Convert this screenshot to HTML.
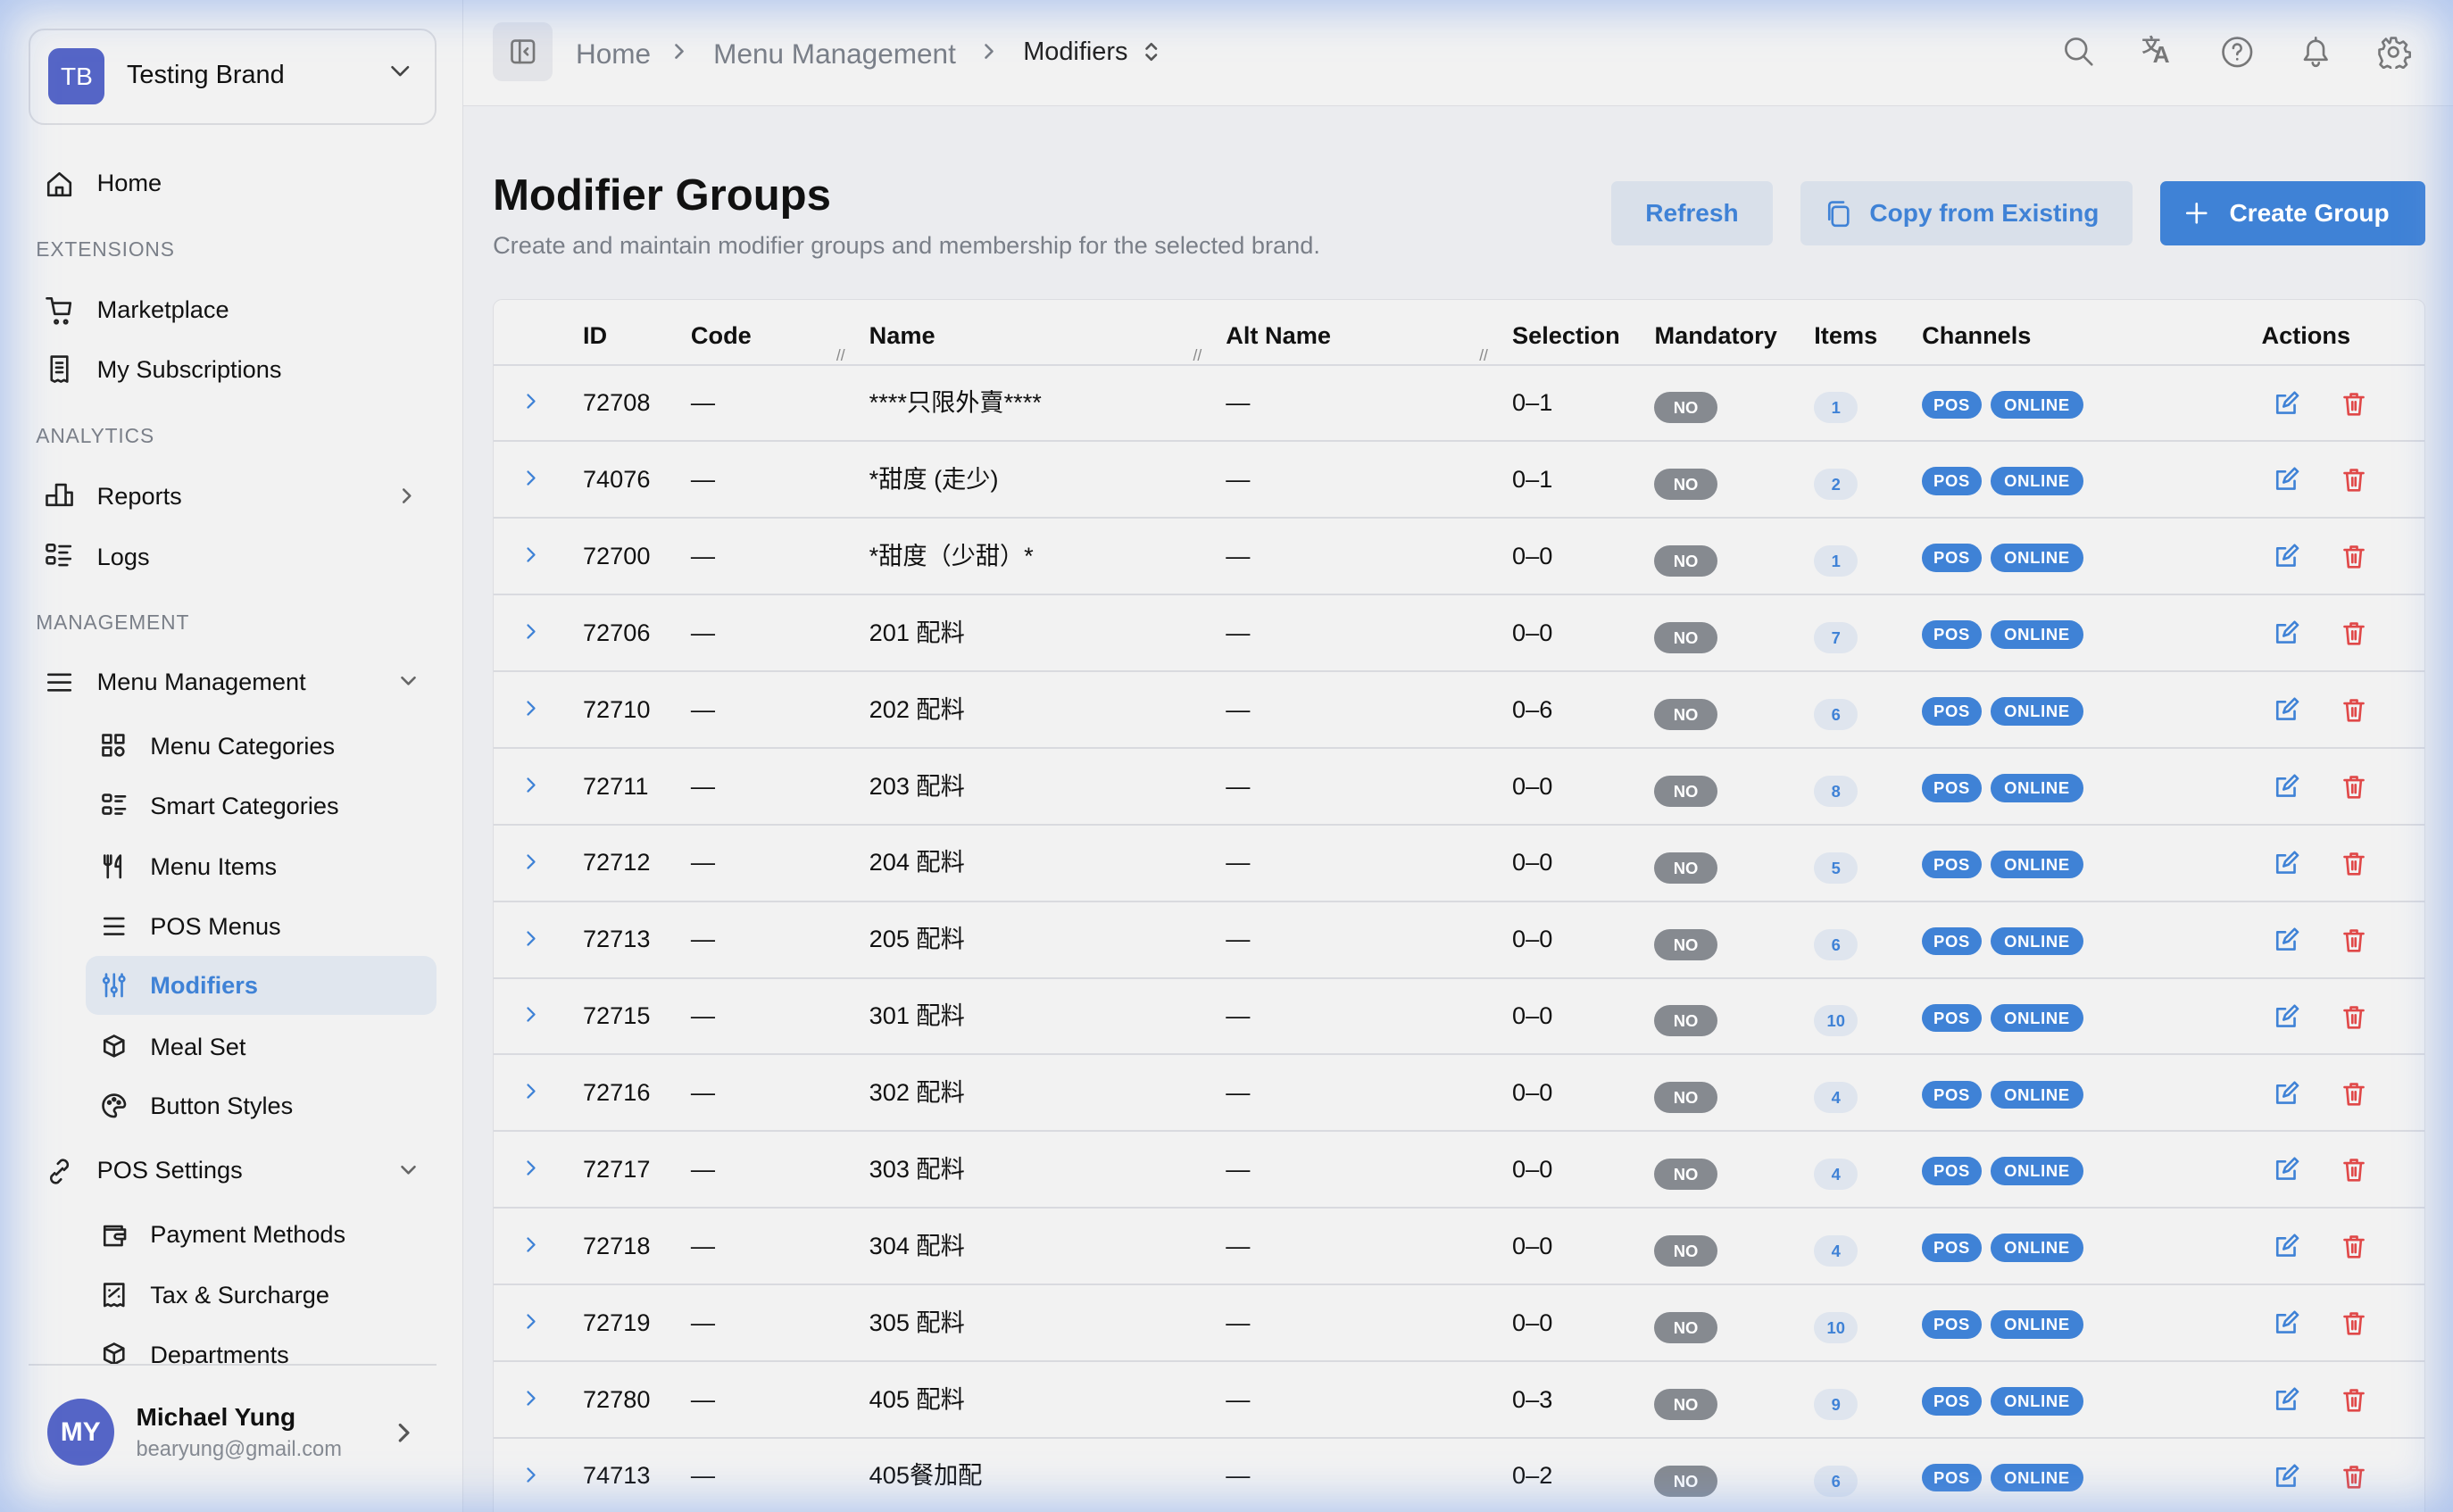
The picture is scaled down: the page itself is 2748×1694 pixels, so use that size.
<!DOCTYPE html>
<html><head><meta charset="utf-8"><style>
*{box-sizing:border-box;margin:0;padding:0}
html,body{width:2748px;height:1694px;overflow:hidden;background:#ebecef}
#w{zoom:1.7526;width:1568px;height:967px;position:relative;font-family:"Liberation Sans","Noto Sans CJK TC",sans-serif;color:#111;overflow:hidden}
.a{position:absolute;white-space:nowrap}
#side{position:absolute;left:0;top:0;width:296px;height:967px;background:#f2f2f2;border-right:1px solid #dcdde1}
#top{position:absolute;left:296px;top:0;right:0;height:68px;background:#f2f2f2;border-bottom:1px solid #dcdde1}
.nav{font-size:15.5px;color:#111}
.sec{font-size:13px;color:#7a7f88;letter-spacing:.5px}
svg{position:absolute;fill:none;stroke:currentColor;stroke-width:1.5;stroke-linecap:round;stroke-linejoin:round}
.ic{color:#222}
#tbl{position:absolute;left:315px;top:191px;width:1235px;height:800px;background:#f2f2f2;border:1px solid #dcdde1;border-radius:6px}
.th{font-size:15.5px;font-weight:bold;top:14px}
.row{position:absolute;left:0;width:100%;height:49px;border-top:1.5px solid #d9dadf;font-size:15.5px}
.row .a{top:14px;line-height:19px;height:19px}
.no{background:#868a90;color:#fff;font-size:10.5px;font-weight:bold;border-radius:10px;width:40px;height:20px!important;text-align:center;line-height:20px!important;top:17px!important}
.cnt{background:#dfe5ee;color:#3f82d6;font-size:10.5px;font-weight:bold;border-radius:10px;min-width:28px;height:20px!important;text-align:center;line-height:20px!important;top:17px!important;padding:0 6px}
.ch{background:#3f82d6;color:#fff;font-size:10.5px;font-weight:bold;border-radius:9px;height:18px!important;line-height:18px!important;text-align:center;top:16px!important;letter-spacing:.4px}
#vig{position:absolute;inset:0;pointer-events:none;box-shadow:inset 0 0 28px 6px rgba(120,160,235,.55)}
</style></head><body><div id="w">
<div id="side">
 <div class="a" style="left:18px;top:18px;width:261px;height:62px;border:1.5px solid #d8d9dd;border-radius:10px"></div>
 <div class="a" style="left:31px;top:31px;width:36px;height:36px;background:#5565c6;border-radius:7px;color:#fff;font-size:16px;text-align:center;line-height:36px">TB</div>
 <div class="a" style="left:81px;top:39px;font-size:16.5px;font-weight:500">Testing Brand</div>
 <svg style="left:249px;top:40px" width="14" height="12" viewBox="0 0 14 12"><path d="M2 3l5 5 5-5" stroke="#444"/></svg>
 <svg class="ic" style="left:28px;top:108px" width="20" height="20" viewBox="0 0 20 20"><path d="M3 9l7-6 7 6v8H3z M8 17v-5h4v5"/></svg>
 <div class="a nav" style="left:62px;top:108px">Home</div>
 <div class="a sec" style="left:23px;top:152px">EXTENSIONS</div>
 <svg class="ic" style="left:28px;top:188px" width="20" height="20" viewBox="0 0 20 20"><path d="M2 3h3l2 10h9l1-7H6 M8 17a1 1 0 1 0 .1 0 M14 17a1 1 0 1 0 .1 0"/></svg>
 <div class="a nav" style="left:62px;top:189px">Marketplace</div>
 <svg class="ic" style="left:28px;top:226px" width="20" height="20" viewBox="0 0 20 20"><path d="M5 2h10v16l-2-1-2 1-2-1-2 1-2-1z M8 6h4 M8 9h4 M8 12h4"/></svg>
 <div class="a nav" style="left:62px;top:227px">My Subscriptions</div>
 <div class="a sec" style="left:23px;top:271px">ANALYTICS</div>
 <svg class="ic" style="left:28px;top:306px" width="20" height="20" viewBox="0 0 20 20"><path d="M2 17h16V9h-4V4H8v7H2z M8 17V11 M14 17V9"/></svg>
 <div class="a nav" style="left:62px;top:308px">Reports</div>
 <svg style="left:255px;top:311px;color:#666" width="10" height="12" viewBox="0 0 10 12"><path d="M3 2l4 4-4 4"/></svg>
 <svg class="ic" style="left:28px;top:345px" width="20" height="20" viewBox="0 0 20 20"><rect x="2" y="3" width="5" height="4" rx="1"/><rect x="2" y="11" width="5" height="4" rx="1"/><path d="M10 4h7 M10 8h5 M10 12h7 M10 16h5"/></svg>
 <div class="a nav" style="left:62px;top:347px">Logs</div>
 <div class="a sec" style="left:23px;top:390px">MANAGEMENT</div>
 <svg class="ic" style="left:28px;top:426px" width="20" height="20" viewBox="0 0 20 20"><path d="M3 5h14 M3 10h14 M3 15h14"/></svg>
 <div class="a nav" style="left:62px;top:427px">Menu Management</div>
 <svg style="left:255px;top:430px;color:#666" width="12" height="10" viewBox="0 0 12 10"><path d="M2 3l4 4 4-4"/></svg>
 <svg class="ic" style="left:64px;top:468px" width="18" height="18" viewBox="0 0 18 18"><rect x="2" y="2" width="5" height="5"/><rect x="10" y="2" width="5" height="5"/><rect x="2" y="10" width="5" height="5"/><circle cx="12.5" cy="12.5" r="2.5"/></svg>
 <div class="a nav" style="left:96px;top:468px">Menu Categories</div>
 <svg class="ic" style="left:64px;top:506px" width="18" height="18" viewBox="0 0 18 18"><rect x="2" y="2" width="5" height="4" rx="1"/><rect x="2" y="10" width="5" height="4" rx="1"/><path d="M10 3h6 M10 6h4 M10 11h6 M10 14h4"/></svg>
 <div class="a nav" style="left:96px;top:506px">Smart Categories</div>
 <svg class="ic" style="left:64px;top:545px" width="18" height="18" viewBox="0 0 18 18"><path d="M3 2v5q2 2 4 0V2 M5 2v14 M13 16V2q-3 3-3 7h3"/></svg>
 <div class="a nav" style="left:96px;top:545px">Menu Items</div>
 <svg class="ic" style="left:64px;top:583px" width="18" height="18" viewBox="0 0 18 18"><path d="M3 4h12 M3 9h12 M3 14h12"/></svg>
 <div class="a nav" style="left:96px;top:583px">POS Menus</div>
 <div class="a" style="left:55px;top:611px;width:224px;height:38px;background:#e0e6ee;border-radius:8px"></div>
 <svg style="left:64px;top:621px;color:#3f82d6" width="18" height="18" viewBox="0 0 18 18"><path d="M4 2v14 M9 2v14 M14 2v14"/><circle cx="4" cy="6" r="1.6" fill="#e0e6ee"/><circle cx="9" cy="12" r="1.6" fill="#e0e6ee"/><circle cx="14" cy="5" r="1.6" fill="#e0e6ee"/></svg>
 <div class="a nav" style="left:96px;top:621px;color:#3f82d6;font-weight:bold">Modifiers</div>
 <svg class="ic" style="left:64px;top:660px" width="18" height="18" viewBox="0 0 18 18"><path d="M9 2l6 3v7l-6 3-6-3V5z M3 5l6 3 6-3 M9 8v7"/></svg>
 <div class="a nav" style="left:96px;top:660px">Meal Set</div>
 <svg class="ic" style="left:64px;top:698px" width="18" height="18" viewBox="0 0 18 18"><path d="M9 2a7 7 0 1 0 0 14c1.5 0 1.5-2 .5-3s0-3 2-3h3c1 0 1.5-1 1.5-2A7 7 0 0 0 9 2z"/><circle cx="6" cy="7" r=".8"/><circle cx="9" cy="5" r=".8"/><circle cx="12" cy="7" r=".8"/></svg>
 <div class="a nav" style="left:96px;top:698px">Button Styles</div>
 <svg class="ic" style="left:28px;top:739px" width="20" height="20" viewBox="0 0 20 20"><path d="M8 12l4-4 M9 5l2-2a3 3 0 0 1 4 4l-2 2 M11 15l-2 2a3 3 0 0 1-4-4l2-2"/></svg>
 <div class="a nav" style="left:62px;top:739px">POS Settings</div>
 <svg style="left:255px;top:743px;color:#666" width="12" height="10" viewBox="0 0 12 10"><path d="M2 3l4 4 4-4"/></svg>
 <svg class="ic" style="left:64px;top:780px" width="18" height="18" viewBox="0 0 18 18"><path d="M14 6V4H3v12h11v-4 M3 6h13v6H11a1.5 1.5 0 0 1 0-3h5"/></svg>
 <div class="a nav" style="left:96px;top:780px">Payment Methods</div>
 <svg class="ic" style="left:64px;top:819px" width="18" height="18" viewBox="0 0 18 18"><path d="M3 2h12v14l-2-1-2 1-2-1-2 1-2-1-2 1z M6 10l6-5 M6 6h.1 M12 10h.1"/></svg>
 <div class="a nav" style="left:96px;top:819px">Tax &amp; Surcharge</div>
 <svg class="ic" style="left:64px;top:857px" width="18" height="18" viewBox="0 0 18 18"><path d="M9 2l6 3v7l-6 3-6-3V5z M3 5l6 3 6-3 M9 8v7"/></svg>
 <div class="a nav" style="left:96px;top:857px">Departments</div>
 <div class="a" style="left:18px;top:872px;width:261px;height:96px;background:#f2f2f2;border-top:1.5px solid #d8d9dd"></div>
 <div class="a" style="left:30px;top:894px;width:43px;height:43px;background:#5565c6;border-radius:50%;color:#fff;font-size:17px;font-weight:bold;text-align:center;line-height:43px">MY</div>
 <div class="a" style="left:87px;top:897px;font-size:16px;font-weight:bold">Michael Yung</div>
 <div class="a" style="left:87px;top:919px;font-size:13.5px;color:#858a92">bearyung@gmail.com</div>
 <svg style="left:253px;top:909px;color:#555" width="10" height="14" viewBox="0 0 10 14"><path d="M3 2l5 5-5 5" stroke-width="1.8"/></svg>
</div>
<div id="top">
 <div class="a" style="left:19px;top:14px;width:38px;height:38px;background:#e3e4e8;border-radius:6px"></div>
 <svg style="left:29px;top:24px;color:#777" width="18" height="18" viewBox="0 0 18 18"><rect x="2" y="2" width="14" height="14" rx="2"/><path d="M7 2v14 M12 7l-2 2 2 2"/></svg>
 <div class="a" style="left:72px;top:24px;font-size:18px;color:#7a7f88">Home</div>
 <svg style="left:134px;top:27px;color:#7a7f88" width="8" height="12" viewBox="0 0 8 12"><path d="M2 2l4 4-4 4"/></svg>
 <div class="a" style="left:160px;top:24px;font-size:18px;color:#7a7f88">Menu Management</div>
 <svg style="left:332px;top:27px;color:#7a7f88" width="8" height="12" viewBox="0 0 8 12"><path d="M2 2l4 4-4 4"/></svg>
 <div class="a" style="left:358px;top:24px;font-size:16.5px;color:#222">Modifiers</div>
 <svg style="left:435px;top:25px;color:#555" width="10" height="16" viewBox="0 0 10 16"><path d="M2 6l3-3 3 3 M2 10l3 3 3-3"/></svg>
 <svg style="left:1022px;top:22px;color:#777" width="22" height="22" viewBox="0 0 22 22" stroke-width="1.8"><circle cx="9" cy="9" r="6.5"/><path d="M14 14l5 5"/></svg>
 <div class="a" style="left:1073px;top:20px;font-size:12px;font-weight:bold;color:#777">文</div><div class="a" style="left:1080px;top:26px;font-size:15px;font-weight:bold;color:#777">A</div>
 <svg style="left:1123px;top:22px;color:#777" width="22" height="22" viewBox="0 0 22 22" stroke-width="1.8"><circle cx="11" cy="11" r="9"/><path d="M8.5 8.5a2.5 2.5 0 1 1 3.5 2.3c-.7.4-1 .9-1 1.7 M11 15.5v.1"/></svg>
 <svg style="left:1173px;top:21px;color:#777" width="22" height="24" viewBox="0 0 22 24" stroke-width="1.8"><path d="M4 17h14l-2-3V10a5 5 0 0 0-10 0v4z M9 19a2 2 0 0 0 4 0 M11 3v2"/></svg>
 <svg style="left:1223px;top:22px;color:#777" width="22" height="22" viewBox="0 0 22 22" stroke-width="1.8"><circle cx="11" cy="11" r="3"/><path d="M9.5 2h3l.5 2.5 2 1 2.3-1.2 2.1 2.1-1.2 2.3.8 2 2.5.5v3l-2.5.5-.8 2 1.2 2.3-2.1 2.1-2.3-1.2-2 .8-.5 2.5h-3l-.5-2.5-2-.8-2.3 1.2-2.1-2.1 1.2-2.3-.8-2L2 12.5v-3l2.5-.5.8-2-1.2-2.3 2.1-2.1L8.5 5.3l.5-.8z"/></svg>
</div>
<div class="a" style="left:315px;top:109px;font-size:28px;font-weight:bold">Modifier Groups</div>
<div class="a" style="left:315px;top:148px;font-size:15.5px;color:#7a7f88">Create and maintain modifier groups and membership for the selected brand.</div>
<div class="a" style="left:1030px;top:116px;width:103px;height:41px;background:#d9e0ea;border-radius:4px;color:#3f82d6;font-size:16px;font-weight:bold;text-align:center;line-height:41px">Refresh</div>
<div class="a" style="left:1151px;top:116px;width:212px;height:41px;background:#d9e0ea;border-radius:4px;color:#3f82d6;font-size:16px;font-weight:bold;line-height:41px;padding-left:44px">Copy from Existing</div>
<svg style="left:1166px;top:127px;color:#3f82d6" width="18" height="20" viewBox="0 0 18 20"><rect x="5" y="5" width="10" height="12" rx="2"/><path d="M3 13V4a2 2 0 0 1 2-2h7"/></svg>
<div class="a" style="left:1381px;top:116px;width:169px;height:41px;background:#3f82d6;border-radius:4px;color:#fff;font-size:16px;font-weight:bold;line-height:41px;padding-left:44px">Create Group</div>
<svg style="left:1395px;top:127px;color:#fff" width="18" height="18" viewBox="0 0 18 18" stroke-width="1.8"><path d="M9 3v12 M3 9h12"/></svg>
<div id="tbl">
 <div class="a th" style="left:57px">ID</div><div class="a th" style="left:126px">Code</div><div class="a th" style="left:240px">Name</div><div class="a th" style="left:468px">Alt Name</div><div class="a th" style="left:651px">Selection</div><div class="a th" style="left:742px">Mandatory</div><div class="a th" style="left:844px">Items</div><div class="a th" style="left:913px">Channels</div><div class="a th" style="left:1130px">Actions</div>
 <div class="a" style="left:219px;top:30px;font-size:10px;color:#888">//</div><div class="a" style="left:447px;top:30px;font-size:10px;color:#888">//</div><div class="a" style="left:630px;top:30px;font-size:10px;color:#888">//</div>
 <div id="rows"></div>
</div>
<div id="vig"></div>
</div>
<script>
var d=[["72708","****只限外賣****","0–1",1],["74076","*甜度 (走少)","0–1",2],["72700","*甜度（少甜）*","0–0",1],["72706","201 配料","0–0",7],["72710","202 配料","0–6",6],["72711","203 配料","0–0",8],["72712","204 配料","0–0",5],["72713","205 配料","0–0",6],["72715","301 配料","0–0",10],["72716","302 配料","0–0",4],["72717","303 配料","0–0",4],["72718","304 配料","0–0",4],["72719","305 配料","0–0",10],["72780","405 配料","0–3",9],["74713","405餐加配","0–2",6]];
var h="";d.forEach(function(r,i){h+='<div class="row" style="top:'+(41+i*49)+'px"><svg style="left:20px;top:17px;color:#3f82d6" width="8" height="12" viewBox="0 0 8 12"><path d="M2 2l4 4-4 4" stroke-width="1.3"/></svg><div class="a" style="left:57px">'+r[0]+'</div><div class="a" style="left:126px">—</div><div class="a" style="left:240px">'+r[1]+'</div><div class="a" style="left:468px">—</div><div class="a" style="left:651px">'+r[2]+'</div><div class="a no" style="left:742px">NO</div><div class="a cnt" style="left:844px">'+r[3]+'</div><div class="a ch" style="left:913px;width:38px">POS</div><div class="a ch" style="left:957px;width:59px">ONLINE</div><svg style="left:1137px;top:16px;color:#3f82d6" width="17" height="17" viewBox="0 0 17 17"><path d="M8 3H3v11h11V9 M7 10l1-3 6-6 2 2-6 6z"/></svg><svg style="left:1181px;top:16px;color:#e04848" width="16" height="17" viewBox="0 0 16 17"><path d="M2 4h12 M6 4V2h4v2 M3.5 4l1 11h7l1-11 M7 7v5 M9 7v5"/></svg></div>'});
document.getElementById("rows").innerHTML=h;
</script>
</body></html>
